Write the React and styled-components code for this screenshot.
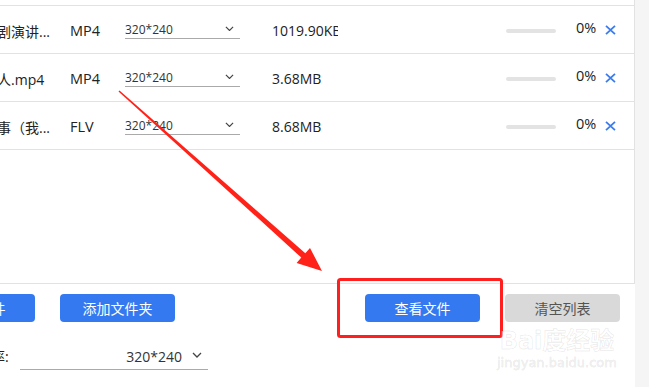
import React from "react";
import styled, { createGlobalStyle } from "styled-components";

const files = [
  { id: 1, name: "中国好戏剧演讲...", format: "MP4", size: "1019.90KB" },
  { id: 2, name: "我的梦中人.mp4", format: "MP4", size: "3.68MB" },
  { id: 3, name: "我的小故事（我...", format: "FLV", size: "8.68MB" },
];

function Chevron({ size = 9 }) {
  return (
    <svg width={size} height={size * 0.6} viewBox="0 0 10 6">
      <path d="M1 1l4 4 4-4" fill="none" stroke="#444" strokeWidth="1.3" />
    </svg>
  );
}

function CloseIcon() {
  return (
    <svg width="11" height="10" viewBox="0 0 11 10">
      <path d="M1 0.8l9 8.4M10 0.8l-9 8.4" stroke="#3a7cf0" strokeWidth="1.8" fill="none" />
    </svg>
  );
}

function App() {
  return (
    <>
      <GlobalStyle />
      <Page>
        <Main>
          <TablePanel>
            <HeaderStub />
            {files.map((file) => (
              <Row key={file.id}>
                <NameCell>{file.name}</NameCell>
                <FormatCell>{file.format}</FormatCell>
                <RowSelect>
                  <span>320*240</span>
                  <Chevron />
                </RowSelect>
                <SizeCell>{file.size}</SizeCell>
                <Progress>
                  <Bar />
                </Progress>
                <Percent>0%</Percent>
                <Close>
                  <CloseIcon />
                </Close>
              </Row>
            ))}
          </TablePanel>

          <ButtonRow>
            <ButtonGroup>
              <Button>添加文件</Button>
              <Button>添加文件夹</Button>
            </ButtonGroup>
            <ButtonGroup>
              <Button>查看文件</Button>
              <Button $gray>清空列表</Button>
            </ButtonGroup>
          </ButtonRow>

          <SettingRow>
            <Label>分辨率:</Label>
            <WideSelect>
              <span>320*240</span>
              <Chevron size={10} />
            </WideSelect>
          </SettingRow>
        </Main>
        <Side />

        <Overlay width="649" height="387" viewBox="0 0 649 387">
          <polygon
            points="118.5,91.5 301.3,257.6 296.6,262.9 322,271 310,248 305.3,253.2 119.5,90.5"
            fill="#ff2219"
          />
          <rect x="338.5" y="279.5" width="163" height="57" rx="2" fill="none" stroke="#ff1f1f" strokeWidth="3" />
        </Overlay>

        <Watermark>
          <Brand>Bai度经验</Brand>
          <Site>jingyan.baidu.com</Site>
        </Watermark>
      </Page>
    </>
  );
}

const GlobalStyle = createGlobalStyle`
  body {
    margin: 0;
    overflow: hidden;
    background: #fff;
    font-family: "Open Sans", "Noto Sans CJK SC", sans-serif;
    color: #222;
  }
`;

const Page = styled.div`
  position: relative;
  width: 649px;
  height: 387px;
  display: flex;
  overflow: hidden;
`;

const Main = styled.div`
  width: 635px;
  background: #fff;
  display: flex;
  flex-direction: column;
`;

const Side = styled.div`
  flex: 1;
  background: #f5f5f5;
`;

const TablePanel = styled.div`
  height: 283px;
  border-right: 1px solid #e2e2e2;
  border-bottom: 1px solid #e2e2e2;
  overflow: hidden;
`;

const HeaderStub = styled.div`
  height: 5px;
  border-bottom: 1px solid #e2e2e2;
`;

const Row = styled.div`
  height: 47px;
  border-bottom: 1px solid #e2e2e2;
  display: flex;
  align-items: center;
  margin-left: -59px;
  font-size: 14px;
`;

const NameCell = styled.div`
  width: 129px;
  white-space: nowrap;
  overflow: hidden;
  padding-top: 2px;
`;

const FormatCell = styled.div`
  width: 55px;
  padding-top: 2px;
  font-size: 14.5px;
`;

const RowSelect = styled.div`
  width: 115px;
  height: 17px;
  margin-top: 1px;
  margin-right: 32px;
  border-bottom: 1px solid #aaa;
  display: flex;
  align-items: flex-start;
  justify-content: space-between;
  padding-right: 6px;
  box-sizing: border-box;
  font-size: 12px;
  line-height: 16px;
  color: #333;

  svg {
    margin-top: 4px;
  }
`;

const SizeCell = styled.div`
  width: 66px;
  white-space: nowrap;
  overflow: hidden;
  padding-top: 2px;
`;

const Progress = styled.div`
  margin-left: 168px;
  width: 50px;
  display: flex;
  align-items: center;
  padding-top: 2px;
`;

const Bar = styled.div`
  width: 100%;
  height: 4px;
  border-radius: 2px;
  background: #e3e3e3;
`;

const Percent = styled.div`
  margin-left: 20px;
  width: 29px;
  margin-top: -5px;
  font-size: 14.5px;
`;

const Close = styled.div`
  display: flex;
  margin-top: 1px;
`;

const ButtonRow = styled.div`
  display: flex;
  justify-content: space-between;
  margin: 10px 15px 0 -80px;
`;

const ButtonGroup = styled.div`
  display: flex;
  gap: 25px;
`;

const Button = styled.div`
  width: 115px;
  height: 28px;
  border-radius: 4px;
  background: ${(props) => (props.$gray ? "#d9d9d9" : "#3479f0")};
  color: ${(props) => (props.$gray ? "#555" : "#fff")};
  font-size: 14px;
  display: flex;
  align-items: center;
  justify-content: center;
`;

const SettingRow = styled.div`
  display: flex;
  align-items: flex-end;
  margin-top: 24px;
  margin-left: -37px;
  font-size: 14px;
`;

const Label = styled.div`
  width: 49px;
  padding-bottom: 4px;
  white-space: nowrap;
`;

const WideSelect = styled.div`
  margin-left: 8px;
  width: 188px;
  height: 22px;
  border-bottom: 1px solid #aaa;
  display: flex;
  justify-content: flex-end;
  align-items: flex-start;
  gap: 10px;
  padding-right: 6px;
  box-sizing: border-box;
  color: #333;
  line-height: 18px;

  svg {
    margin-top: 4px;
  }
`;

const Overlay = styled.svg`
  position: absolute;
  left: 0;
  top: 0;
  pointer-events: none;
`;

const Watermark = styled.div`
  position: absolute;
  left: 497px;
  top: 327px;
  display: flex;
  flex-direction: column;
  align-items: center;
  color: rgba(255, 255, 255, 0.6);
  -webkit-text-stroke: 1px rgba(0, 0, 0, 0.08);
  font-family: "DejaVu Sans", "Noto Sans CJK SC", sans-serif;
  pointer-events: none;
`;

const Brand = styled.div`
  font-size: 24px;
  font-weight: 700;
  line-height: 28px;
`;

const Site = styled.div`
  font-size: 13px;
  line-height: 16px;
`;

export default App;
